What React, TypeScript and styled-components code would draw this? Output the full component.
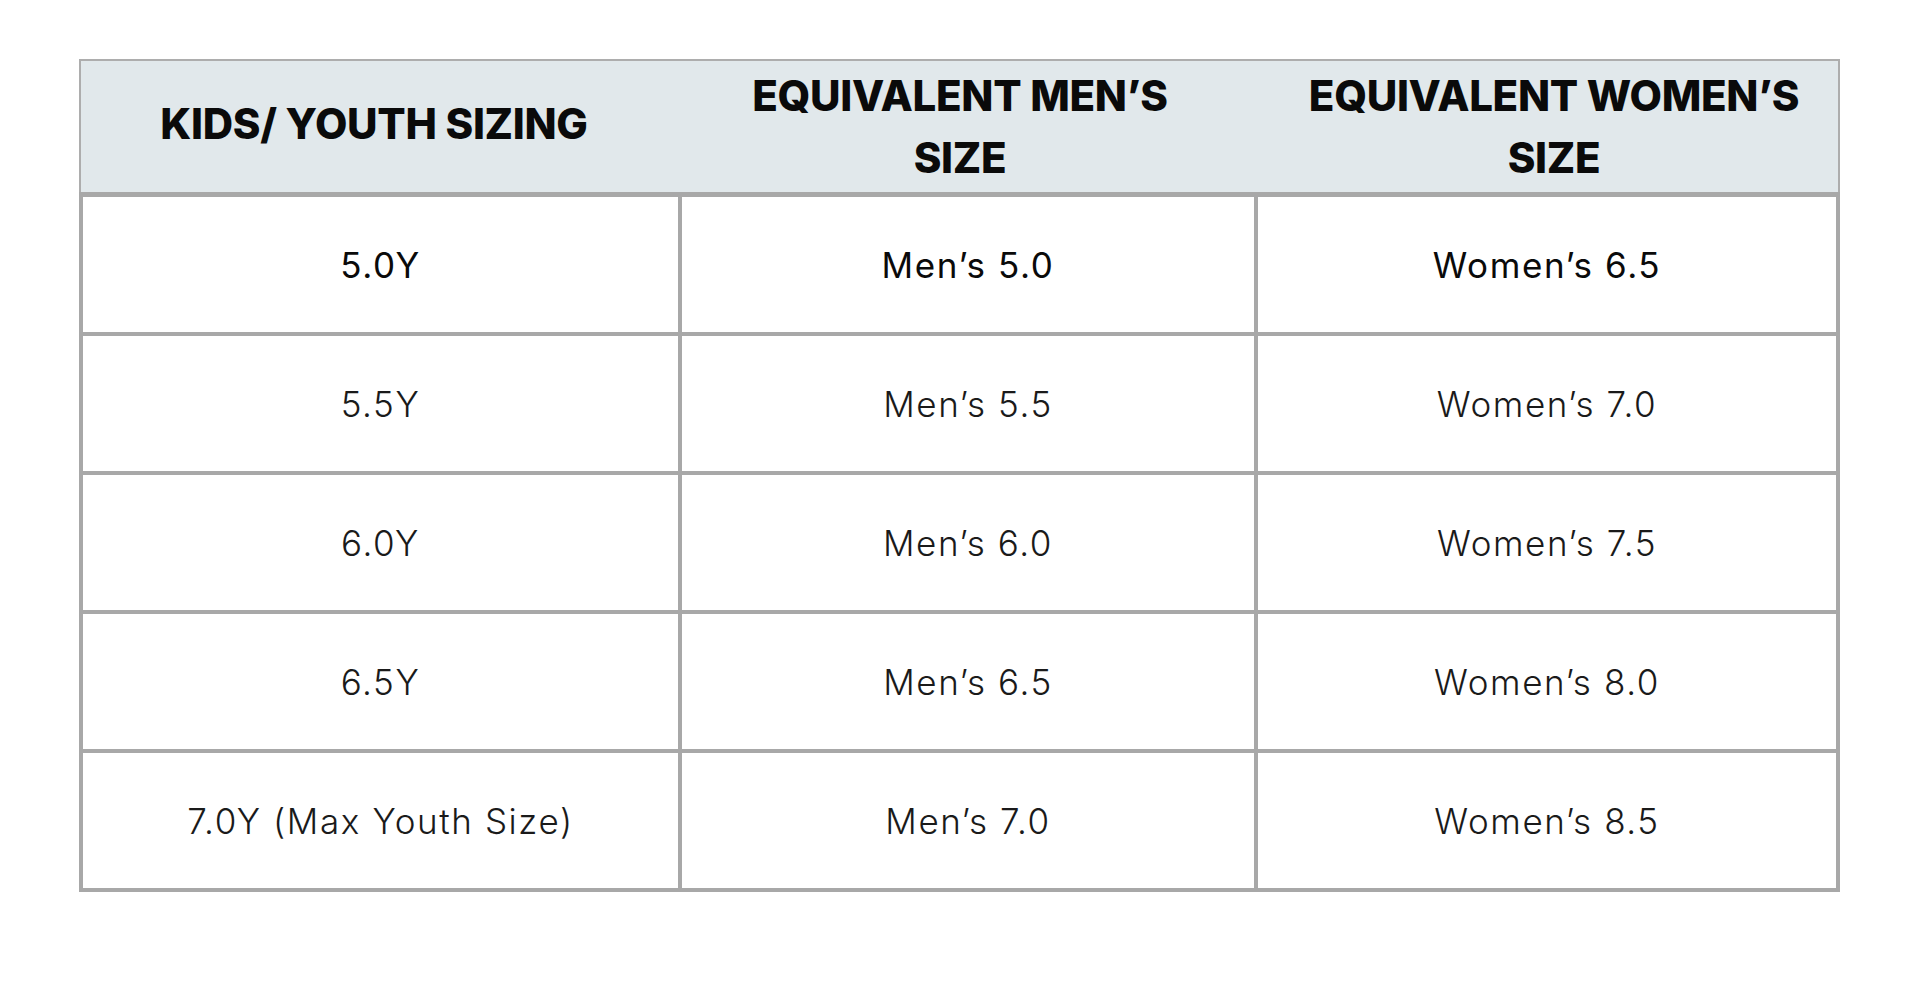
import React from "react";
import styled, { createGlobalStyle } from "styled-components";

const GlobalStyle = createGlobalStyle`
	html, body {
		margin: 0;
		padding: 0;
		background: #ffffff;
	}

	body {
		font-family: Inter, "Liberation Sans", sans-serif;
		color: #111111;
	}
`;

const Page = styled.div`
	width: 1920px;
	height: 998px;
	padding: 59px 0 0 79px;
	box-sizing: border-box;
`;

const Table = styled.div`
	width: 1761px;
`;

const HeaderRow = styled.div`
	display: grid;
	grid-template-columns: 586px 586px 1fr;
	height: 133px;
	box-sizing: border-box;
	background: #e1e8eb;
	border: 2px solid #adadad;
	border-bottom: none;
`;

const HeaderCell = styled.div<{ $shift?: number; $lift?: number }>`
	display: flex;
	align-items: center;
	justify-content: center;
	text-align: center;
	padding-left: ${(p) => p.$shift ?? 0}px;
	padding-bottom: ${(p) => p.$lift ?? 0}px;
	font-size: 42px;
	font-weight: 800;
	line-height: 62px;
	letter-spacing: -0.3px;
	color: #0a0a0a;
`;

const Body = styled.div`
	display: grid;
	grid-template-columns: 595px 572px 578px;
	grid-auto-rows: 135px;
	gap: 4px;
	padding: 5px 4px 4px 4px;
	background: #a8a8a8;
`;

const Cell = styled.div<{ $strong?: boolean }>`
	display: flex;
	align-items: center;
	justify-content: center;
	background: #ffffff;
	font-size: 35px;
	font-weight: ${(p) => (p.$strong ? 400 : 300)};
	letter-spacing: 1.6px;
	color: ${(p) => (p.$strong ? "#0a0a0a" : "#1a1a1a")};
`;

const rows = [
	["5.0Y", "Men’s 5.0", "Women’s 6.5"],
	["5.5Y", "Men’s 5.5", "Women’s 7.0"],
	["6.0Y", "Men’s 6.0", "Women’s 7.5"],
	["6.5Y", "Men’s 6.5", "Women’s 8.0"],
	["7.0Y (Max Youth Size)", "Men’s 7.0", "Women’s 8.5"],
];

const App = () => {
	return (
		<>
			<GlobalStyle />
			<Page>
				<Table>
					<HeaderRow>
						<HeaderCell $lift={6}>KIDS/ YOUTH SIZING</HeaderCell>
						<HeaderCell>
							EQUIVALENT MEN’S
							<br />
							SIZE
						</HeaderCell>
						<HeaderCell $shift={17}>
							EQUIVALENT WOMEN’S
							<br />
							SIZE
						</HeaderCell>
					</HeaderRow>
					<Body>
						{rows.map((row, i) =>
							row.map((text, j) => (
								<Cell key={`${i}-${j}`} $strong={i === 0}>
									{text}
								</Cell>
							))
						)}
					</Body>
				</Table>
			</Page>
		</>
	);
};

export default App;
